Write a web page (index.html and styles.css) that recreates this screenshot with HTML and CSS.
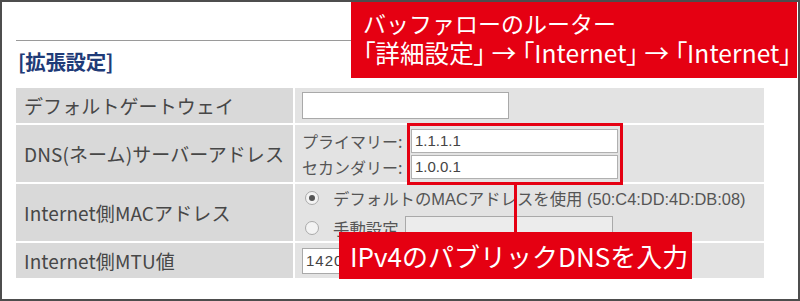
FILE: index.html
```html
<!DOCTYPE html>
<html lang="ja">
<head>
<meta charset="utf-8">
<link rel="stylesheet" href="styles.css">
</head>
<body>
<div class="frame">
  <div class="rule"></div>
  <h2 class="section-title">[拡張設定]</h2>
  <div class="settings">
    <div class="label">デフォルトゲートウェイ</div>
    <div class="value"><span class="input gw"></span></div>

    <div class="label">DNS(ネーム)サーバーアドレス</div>
    <div class="value dns">
      <div class="dns-row"><span class="dns-label">プライマリー:</span><span class="input ip">1.1.1.1</span></div>
      <div class="dns-row"><span class="dns-label">セカンダリー:</span><span class="input ip">1.0.0.1</span></div>
    </div>

    <div class="label">Internet側MACアドレス</div>
    <div class="value mac">
      <div class="mac-row"><span class="radio checked"></span><span>デフォルトのMACアドレスを使用 (50:C4:DD:4D:DB:08)</span></div>
      <div class="mac-row"><span class="radio"></span><span>手動設定</span><span class="input manual"></span></div>
    </div>

    <div class="label">Internet側MTU値</div>
    <div class="value"><span class="input mtu">1420</span></div>
  </div>

  <div class="callout-top">
    <div class="headline">バッファローのルーター</div>
    <div class="path">「詳細設定」 → 「Internet」 → 「Internet」</div>
  </div>
  <div class="highlight"></div>
  <div class="connector"></div>
  <div class="callout-bottom">IPv4のパブリックDNSを入力</div>
</div>
</body>
</html>
```

FILE: styles.css
```css
html, body {
  margin: 0;
  padding: 0;
  background: #ffffff;
}
body {
  font-family: "Noto Sans CJK JP", "Noto Sans", "Liberation Sans", sans-serif;
}
.frame {
  position: relative;
  width: 800px;
  height: 301px;
  box-sizing: border-box;
  border: 2px solid #4d4d4d;
  padding: 38px 36px 0 14px;
  overflow: hidden;
}
.rule {
  height: 1px;
  background: #9a9a9a;
}
.section-title {
  margin: 7px 0 0 2px;
  font-size: 20.5px;
  line-height: 27px;
  font-weight: bold;
  color: #1f3b78;
  letter-spacing: -0.4px;
}
.settings {
  margin-top: 13px;
  display: grid;
  grid-template-columns: 277px 469px;
  grid-template-rows: 35px 57px 57px 35px;
  gap: 2px 2px;
  background: #ffffff;
}
.label {
  background: #d9d9d9;
  color: #474747;
  font-size: 19px;
  letter-spacing: 0.1px;
  display: flex;
  align-items: center;
  padding-left: 8px;
  white-space: nowrap;
}
.value {
  background: #e3e3e3;
  color: #555;
  font-size: 15px;
  display: flex;
  align-items: center;
  padding-left: 7px;
  white-space: nowrap;
}
.input {
  display: inline-flex;
  align-items: center;
  box-sizing: border-box;
  background: #fff;
  border: 1px solid #a9a9a9;
  font-family: "Liberation Sans", sans-serif;
  font-size: 15px;
  color: #444;
  padding-left: 3px;
}
.gw {
  width: 207px;
  height: 27px;
}
.dns {
  flex-direction: column;
  align-items: flex-start;
  justify-content: center;
  gap: 2px;
}
.dns-row {
  display: flex;
  align-items: center;
}
.dns-label {
  width: 109px;
  color: #555;
  font-size: 16px;
}
.ip {
  width: 207px;
  height: 24px;
  border-color: #b0b0b0;
}
.mac {
  flex-direction: column;
  align-items: flex-start;
  justify-content: center;
  gap: 6px;
  padding-left: 10px;
}
.mac-row {
  display: flex;
  align-items: center;
  gap: 14px;
  font-family: "Liberation Sans", "Noto Sans CJK JP", sans-serif;
  font-size: 16.4px;
  color: #555;
}
.radio {
  width: 14px;
  height: 14px;
  border-radius: 50%;
  border: 1px solid #aaa;
  background: #f3f3f3;
  box-sizing: border-box;
  display: inline-flex;
  align-items: center;
  justify-content: center;
}
.radio.checked::after {
  content: "";
  width: 6px;
  height: 6px;
  border-radius: 50%;
  background: #555;
}
.manual {
  width: 208px;
  height: 24px;
  background: #ececec;
  margin-left: -8px;
}
.mtu {
  width: 80px;
  height: 26px;
  letter-spacing: 1px;
}
.callout-top {
  position: absolute;
  left: 349px;
  top: 0;
  width: 446px;
  height: 76px;
  background: #e50012;
  color: #fff;
  font-size: 23px;
  line-height: 30px;
  padding: 6px 0 0 12px;
  box-sizing: border-box;
  white-space: nowrap;
}
.path {
  font-size: 24.5px;
  font-feature-settings: "palt";
  letter-spacing: 0.1px;
}
.highlight {
  position: absolute;
  left: 405px;
  top: 121px;
  width: 216px;
  height: 62px;
  border: 3px solid #e50012;
  box-sizing: border-box;
}
.connector {
  position: absolute;
  left: 512px;
  top: 182px;
  width: 3px;
  height: 50px;
  background: #e50012;
}
.callout-bottom {
  position: absolute;
  left: 337px;
  top: 230px;
  width: 353px;
  height: 47px;
  background: #e50012;
  color: #fff;
  font-size: 26px;
  line-height: 47px;
  padding-left: 11px;
  box-sizing: border-box;
  white-space: nowrap;
}
```
